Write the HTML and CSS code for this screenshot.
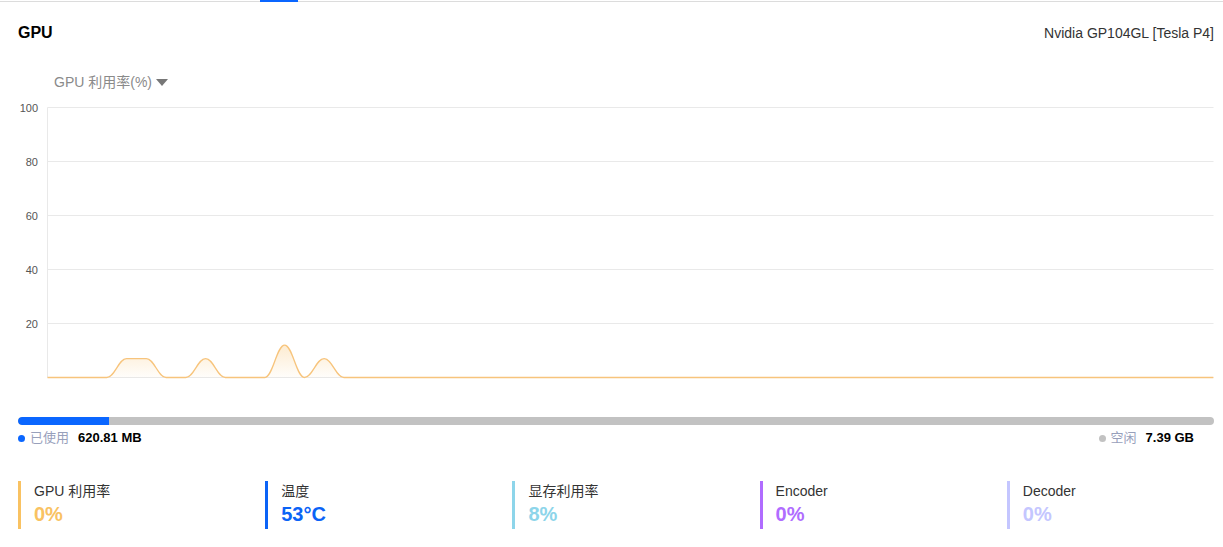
FILE: index.html
```html
<!DOCTYPE html>
<html lang="zh-CN">
<head>
<meta charset="utf-8">
<title>GPU</title>
<link rel="stylesheet" href="styles.css">
</head>
<body>
<div class="tabs"><span class="tab-ink"></span></div>
<section class="panel">
  <header class="panel-head">
    <h2 class="panel-title">GPU</h2>
    <span class="model">Nvidia GP104GL [Tesla P4]</span>
  </header>

  <div class="metric-select">
    <span>GPU 利用率(%)</span>
    <svg class="caret" width="12" height="7" viewBox="0 0 12 7"><path d="M0 0H12L6 7Z"/></svg>
  </div>

  <svg class="chart" width="1196" height="292" viewBox="0 0 1196 292">
    <defs>
      <linearGradient id="area" x1="0" y1="250" x2="0" y2="282.5" gradientUnits="userSpaceOnUse">
        <stop offset="0" stop-color="#f9c26e" stop-opacity="0.32"/>
        <stop offset="1" stop-color="#f9c26e" stop-opacity="0.03"/>
      </linearGradient>
    </defs>
    <g class="grid">
      <line x1="29.5" y1="12.5" x2="1195.5" y2="12.5"/>
      <line x1="29.5" y1="66.5" x2="1195.5" y2="66.5"/>
      <line x1="29.5" y1="120.5" x2="1195.5" y2="120.5"/>
      <line x1="29.5" y1="174.5" x2="1195.5" y2="174.5"/>
      <line x1="29.5" y1="228.5" x2="1195.5" y2="228.5"/>
      <line x1="29.5" y1="282.5" x2="1195.5" y2="282.5"/>
      <line x1="29.5" y1="12.5" x2="29.5" y2="282.5"/>
    </g>
    <g class="y-labels">
      <text x="20" y="16.5">100</text>
      <text x="20" y="70.5">80</text>
      <text x="20" y="124.5">60</text>
      <text x="20" y="178.5">40</text>
      <text x="20" y="232.5">20</text>
    </g>
    <path class="area" d="M29.5 282.5H88.78C96.7 282.5 100.6 263.6 108.54 263.6H128.3C136.2 263.6 140.1 282.5 148.06 282.5H167.82C175.7 282.5 179.7 263.6 187.58 263.6C195.5 263.6 199.4 282.5 207.34 282.5H246.86C254.8 282.5 258.7 250.1 266.62 250.1C274.5 250.1 278.5 282.5 286.38 282.5C294.3 282.5 298.2 263.6 306.14 263.6C314.1 263.6 318 282.5 325.9 282.5H1195.34Z"/>
    <path class="line" d="M29.5 282.5H88.78C96.7 282.5 100.6 263.6 108.54 263.6H128.3C136.2 263.6 140.1 282.5 148.06 282.5H167.82C175.7 282.5 179.7 263.6 187.58 263.6C195.5 263.6 199.4 282.5 207.34 282.5H246.86C254.8 282.5 258.7 250.1 266.62 250.1C274.5 250.1 278.5 282.5 286.38 282.5C294.3 282.5 298.2 263.6 306.14 263.6C314.1 263.6 318 282.5 325.9 282.5H1195.34"/>
  </svg>

  <div class="mem-bar"><div class="mem-used" style="width:7.58%"></div></div>
  <div class="mem-legend">
    <div class="legend-item">
      <span class="dot dot-used"></span>
      <span class="legend-label">已使用</span>
      <b class="legend-value">620.81 MB</b>
    </div>
    <div class="legend-item">
      <span class="dot dot-free"></span>
      <span class="legend-label">空闲</span>
      <b class="legend-value">7.39 GB</b>
    </div>
  </div>

  <div class="stats">
    <div class="stat stat-util">
      <div class="stat-label">GPU 利用率</div>
      <div class="stat-value">0%</div>
    </div>
    <div class="stat stat-temp">
      <div class="stat-label">温度</div>
      <div class="stat-value">53°C</div>
    </div>
    <div class="stat stat-mem">
      <div class="stat-label">显存利用率</div>
      <div class="stat-value">8%</div>
    </div>
    <div class="stat stat-enc">
      <div class="stat-label">Encoder</div>
      <div class="stat-value">0%</div>
    </div>
    <div class="stat stat-dec">
      <div class="stat-label">Decoder</div>
      <div class="stat-value">0%</div>
    </div>
  </div>
</section>
</body>
</html>
```

FILE: styles.css
```css
* {
  box-sizing: border-box;
}

html, body {
  margin: 0;
  background: #fff;
}

body {
  font-family: "Liberation Sans", "Noto Sans CJK SC", sans-serif;
  color: #333;
}

/* tab strip with the active ink bar */
.tabs {
  height: 2px;
  border-bottom: 1px solid #dcdcdc;
  padding-left: 260px;
}

.tab-ink {
  display: block;
  width: 38px;
  height: 2px;
  background: #0a66ff;
}

.panel {
  padding: 0 9px 0 18px;
}

.panel-head {
  display: flex;
  justify-content: space-between;
  align-items: center;
  padding-top: 21px;
  height: 41px;
}

.panel-title {
  margin: 0;
  font-size: 16px;
  line-height: 20px;
  font-weight: bold;
  color: #000;
}

.model {
  font-size: 14px;
  line-height: 20px;
  color: #333;
}

.metric-select {
  display: flex;
  align-items: center;
  gap: 4px;
  margin-top: 30px;
  padding-left: 36px;
  font-size: 14px;
  line-height: 18px;
  color: #8a8a8a;
}

.caret {
  display: block;
  fill: #777;
  margin-top: 1px;
}

.chart {
  display: block;
  margin-top: 4px;
}

.grid line {
  stroke: #e9e9e9;
  stroke-width: 1;
}

.y-labels text {
  font-family: "Liberation Sans", sans-serif;
  font-size: 11px;
  fill: #555;
  text-anchor: end;
}

.area {
  fill: url(#area);
}

.line {
  fill: none;
  stroke: #f7c47c;
  stroke-width: 1.3;
}

/* memory usage bar */
.mem-bar {
  margin-top: 30px;
  height: 8px;
  border-radius: 4px;
  background: #c2c2c2;
  overflow: hidden;
}

.mem-used {
  height: 100%;
  background: #0a66ff;
  border-radius: 4px 0 0 4px;
}

.mem-legend {
  display: flex;
  justify-content: space-between;
  margin-top: 5px;
  padding-right: 20px;
  font-size: 13px;
  line-height: 16px;
}

.legend-item {
  display: flex;
  align-items: center;
}

.dot {
  width: 7px;
  height: 7px;
  border-radius: 50%;
  margin-right: 5px;
}

.dot-used {
  background: #0a66ff;
}

.dot-free {
  background: #c2c2c2;
}

.legend-label {
  color: #98a0bb;
  margin-right: 9px;
}

.legend-value {
  color: #000;
  font-weight: bold;
}

/* summary figures */
.stats {
  display: grid;
  grid-template-columns: repeat(5, 1fr);
  column-gap: 40px;
  margin-top: 35px;
}

.stat {
  height: 48px;
  border-left: 3px solid;
  padding-left: 13px;
}

.stat-label {
  font-size: 14px;
  line-height: 20px;
  color: #333;
}

.stat-value {
  font-size: 20px;
  line-height: 27px;
  font-weight: bold;
}

.stat-util {
  border-color: #f9c262;
  color: #f9c262;
}

.stat-temp {
  border-color: #0b63f6;
  color: #0b63f6;
}

.stat-mem {
  border-color: #8dd5ea;
  color: #8dd5ea;
}

.stat-enc {
  border-color: #b06cff;
  color: #b06cff;
}

.stat-dec {
  border-color: #c4c6ff;
  color: #c4c6ff;
}
```
